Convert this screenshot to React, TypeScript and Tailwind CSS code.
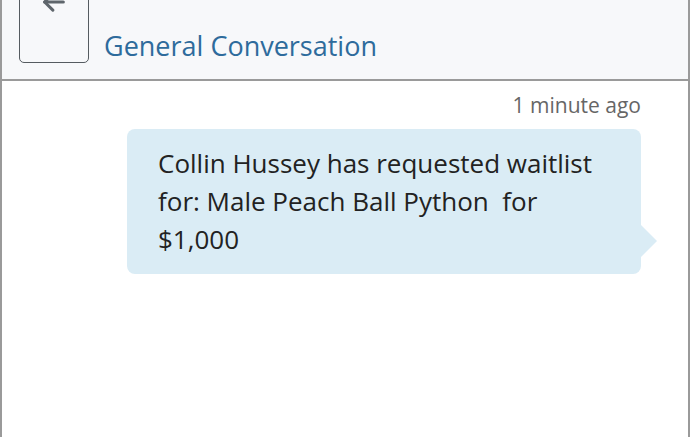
import React from 'react';

// Header with back button and conversation title
function Header() {
  return (
    <div className="h-[81px] bg-[#f7f8fa] border-b-2 border-[#9a9a9a] flex items-end">
      <div className="ml-[17px] mb-[16px] w-[70px] h-[80px] border-[1.5px] border-[#555b60] rounded-[5px] flex justify-center items-start pt-[4px]">
        <svg width="28" height="28" viewBox="0 0 24 24" fill="none" stroke="#5f666c" strokeWidth="2.6" strokeLinecap="round" strokeLinejoin="round">
          <path d="M20 12H4" />
          <path d="M11 19l-7-7 7-7" />
        </svg>
      </div>
      <h1 className="ml-[15px] mb-[20px] text-[27px] leading-none text-[#2e6b9c] font-['Open_Sans',sans-serif]">
        General Conversation
      </h1>
    </div>
  );
}

export default function App() {
  return (
    <div className="w-[690px] h-[437px] bg-white border-x-2 border-[#9a9a9a] overflow-hidden font-['Open_Sans',sans-serif]">
      <Header />
      <div className="flex flex-col items-end pr-[47px] pt-[11px]">
        <span className="text-[21px] leading-[26px] text-[#666]">1 minute ago</span>
        <div className="relative mt-[11px] w-[514px] bg-[#daecf5] rounded-[8px] pl-[31px] pr-[30px] pt-[15px] pb-[16px]">
          <p className="text-[26px] leading-[38px] text-[#222]">
            Collin Hussey has requested waitlist for: Male Peach Ball Python&nbsp; for $1,000
          </p>
          <div className="absolute right-[-16px] top-[96px] w-0 h-0 border-y-[16px] border-y-transparent border-l-[16px] border-l-[#daecf5]" />
        </div>
      </div>
    </div>
  );
}
